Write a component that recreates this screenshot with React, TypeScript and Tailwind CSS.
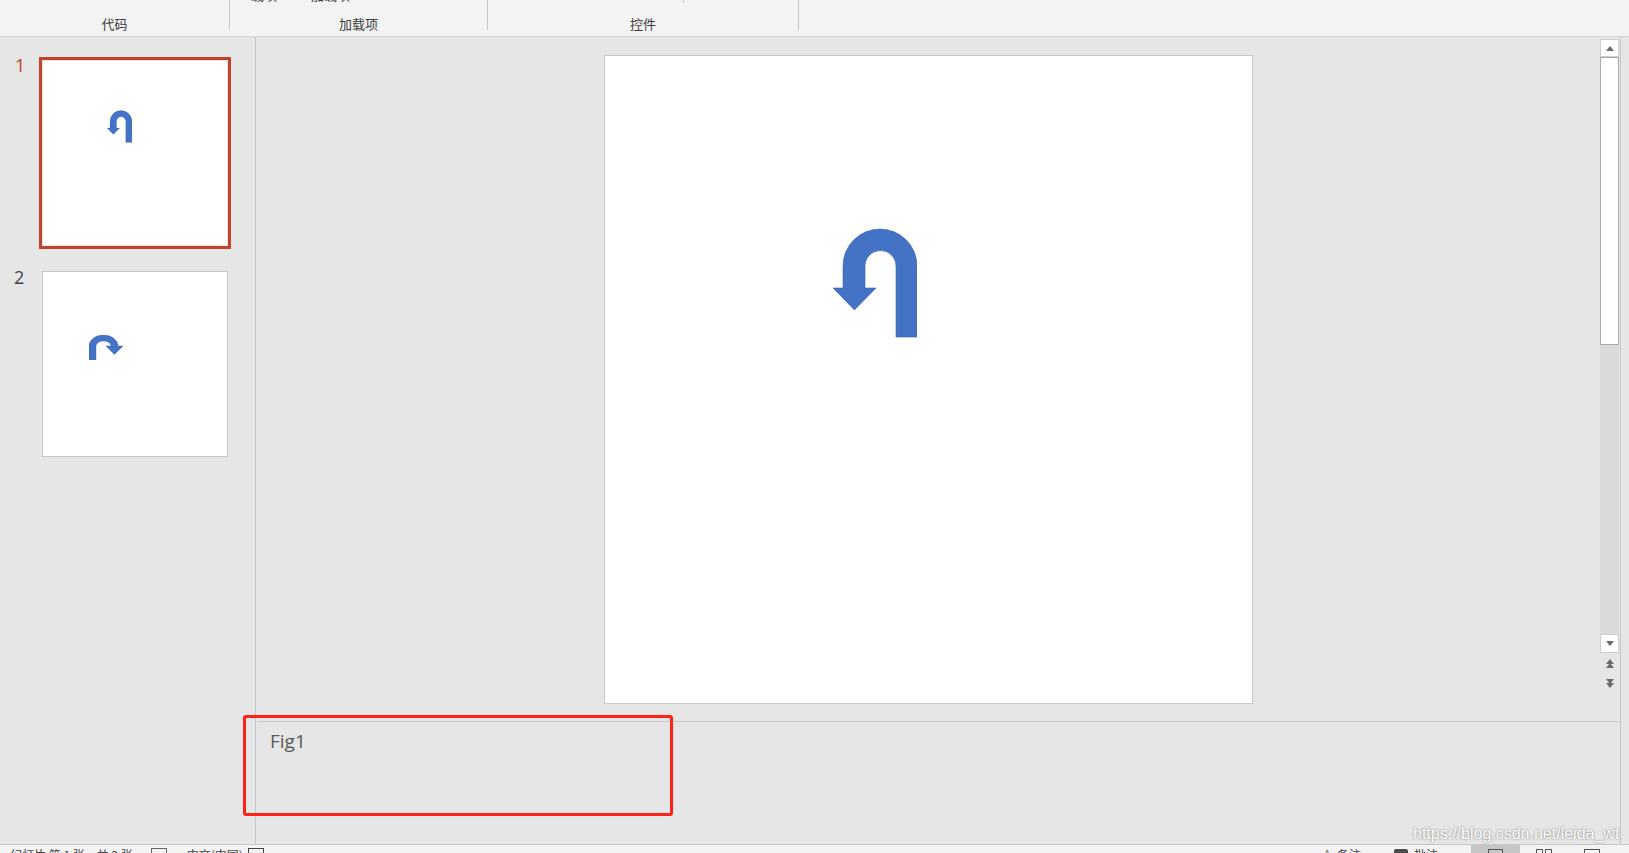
import React from "react";

function UTurnDown({ className }: { className?: string }) {
  return (
    <svg viewBox="0 0 84 110" className={className}>
      <path
        d="M84 109 L84 38 A37 37 0 0 0 10 38 L10 60 L0 60 L21.5 82 L43 60 L32 60 L32 38 A15.5 15.5 0 0 1 63 38 L63 109 Z"
        fill="#4472c4"
        stroke="#3a63ad"
        strokeWidth="0.6"
      />
    </svg>
  );
}

function UTurnRight({ className }: { className?: string }) {
  return (
    <svg viewBox="0 0 34 25" className={className}>
      <path
        d="M0 25 L0 11 A14.5 11 0 0 1 29 11 L34 11 L25.5 19.5 L17 11 L22 11 A7.5 5 0 0 0 7 11 L7 25 Z"
        fill="#4472c4"
        stroke="#3a63ad"
        strokeWidth="0.4"
      />
    </svg>
  );
}

function Ribbon() {
  return (
    <div className="h-[37px] shrink-0 bg-[#f3f3f3] border-b border-[#d5d5d5] flex text-[13px] text-[#3b3b3b] font-['Noto_Sans_CJK_SC',sans-serif] overflow-hidden">
      <div className="w-[229px] flex justify-center pt-[15px] leading-[18px]">代码</div>
      <div className="w-px h-[30px] bg-[#c8c8c8]" />
      <div className="w-[257px] flex flex-col items-center leading-[18px]">
        <div className="flex h-[14px] -mt-[14px] w-full">
          <span className="ml-[21px]">载项</span>
          <span className="ml-[34px]">加载项</span>
        </div>
        <div className="pt-[15px]">加载项</div>
      </div>
      <div className="w-px h-[30px] bg-[#c8c8c8]" />
      <div className="w-[310px] flex flex-col items-center leading-[18px]">
        <div className="flex h-0 w-full">
          <div className="ml-[195px] w-px h-[3px] bg-[#c8c8c8]" />
        </div>
        <div className="pt-[15px]">控件</div>
      </div>
      <div className="w-px h-[30px] bg-[#c8c8c8]" />
    </div>
  );
}

function LeftPanel() {
  return (
    <div className="w-[256px] shrink-0 border-r border-[#c6c6c6] pt-[20px] font-['Open_Sans',sans-serif]">
      <div className="flex">
        <div className="w-[39px] pl-[15px] -mt-[2px] text-[18px] leading-[20px] text-[#c43e1c]">1</div>
        <div className="w-[192px] h-[192px] border-[3px] border-[#c0432b] bg-white">
          <div className="relative w-full h-full border border-[#e2e2e2]">
            <UTurnDown className="absolute left-[64px] top-[49px] w-[25px] h-[33px]" />
          </div>
        </div>
      </div>
      <div className="flex mt-[22px]">
        <div className="w-[42px] pl-[14px] -mt-[4px] text-[18px] leading-[20px] text-[#444]">2</div>
        <div className="relative w-[186px] h-[186px] border border-[#c8c8c8] bg-white">
          <UTurnRight className="absolute left-[46px] top-[63px] w-[34px] h-[25px]" />
        </div>
      </div>
    </div>
  );
}

function Tri({ up }: { up?: boolean }) {
  return (
    <svg width="8" height="5" viewBox="0 0 8 5">
      <path d={up ? "M0 5 L4 0 L8 5 Z" : "M0 0 L8 0 L4 5 Z"} fill="#6b6b6b" />
    </svg>
  );
}

function Scrollbar() {
  return (
    <div className="w-[20px] shrink-0 pt-[2px] flex flex-col">
      <div className="w-[19px] h-[18px] bg-white border border-[#cdcdcd] flex items-center justify-center">
        <Tri up />
      </div>
      <div className="w-[19px] h-[288px] bg-white border border-[#a9a9a9]" />
      <div className="w-[19px] h-[289px] bg-[#dadada]" />
      <div className="w-[19px] h-[19px] bg-white border border-[#cdcdcd] flex items-center justify-center">
        <Tri />
      </div>
      <div className="w-[19px] flex flex-col items-center mt-[6px]">
        <Tri up />
        <div className="-mt-[1px]">
          <Tri up />
        </div>
      </div>
      <div className="w-[19px] flex flex-col items-center mt-[11px]">
        <Tri />
        <div className="-mt-[1px]">
          <Tri />
        </div>
      </div>
    </div>
  );
}

function StatusBar() {
  return (
    <div className="h-[40px] shrink-0 bg-[#f3f3f3] border-t border-[#c6c6c6] flex text-[12px] leading-[16px] text-[#444] font-['Noto_Sans_CJK_SC',sans-serif] pt-[2px]">
      <span className="ml-[10px]">幻灯片 第 1 张，共 2 张</span>
      <div className="ml-[18px] mt-[1px] w-[16px] h-[12px] border border-[#666]" />
      <span className="ml-[20px]">中文(中国)</span>
      <div className="ml-[5px] mt-[1px] w-[16px] h-[12px] border border-[#444]" />
      <div className="flex-1" />
      <span className="text-[#555]">≜</span>
      <span className="ml-[5px]">备注</span>
      <div className="ml-[33px] mt-[2px] w-[14px] h-[12px] rounded-[2px] bg-[#4a4a4a]" />
      <span className="ml-[6px]">批注</span>
      <div className="ml-[33px] -mt-[2px] w-[49px] h-[30px] bg-[#c6c6c6] flex justify-center pt-[4px]">
        <div className="w-[15px] h-[11px] border border-[#555]" />
      </div>
      <div className="ml-[16px] mt-[2px] w-[7px] h-[9px] border border-[#555]" />
      <div className="ml-[2px] mt-[2px] w-[7px] h-[9px] border border-[#555]" />
      <div className="ml-[32px] mt-[2px] w-[16px] h-[11px] border border-[#555]" />
      <div className="w-[29px]" />
    </div>
  );
}

export default function App() {
  return (
    <div className="relative w-[1629px] h-[853px] overflow-hidden bg-[#e6e6e6] flex flex-col">
      <Ribbon />
      <div className="flex h-[807px] shrink-0">
        <LeftPanel />
        <div className="flex flex-1">
          <div className="w-[1364px] flex flex-col">
            <div className="h-[684px] flex shrink-0">
              <div className="flex-1 flex items-center justify-center">
                <div className="relative w-[649px] h-[649px] bg-white border border-[#c8c8c8]">
                  <UTurnDown className="absolute left-[228px] top-[172px] w-[84px] h-[110px]" />
                </div>
              </div>
              <Scrollbar />
            </div>
            <div className="flex-1 ml-[2px] border-t border-[#c6c6c6] pl-[12px] pt-[6px]">
              <p className="font-['Open_Sans',sans-serif] text-[19px] leading-[26px] text-[#595959]">Fig1</p>
            </div>
          </div>
          <div className="flex-1 border-l border-[#c6c6c6]" />
        </div>
      </div>
      <StatusBar />

      {/* annotation box over the notes pane */}
      <div className="absolute left-[243px] top-[715px] w-[430px] h-[101px] border-[3px] border-[#ff2116] rounded-[3px]" />
      {/* watermark */}
      <div className="absolute left-[1413px] top-[824px] font-['Liberation_Sans',sans-serif] text-[16px] leading-[20px] tracking-[0px] text-white [text-shadow:0_0_2px_rgba(90,90,90,0.9)]">
        https://blog.csdn.net/leida_wt
      </div>
    </div>
  );
}
